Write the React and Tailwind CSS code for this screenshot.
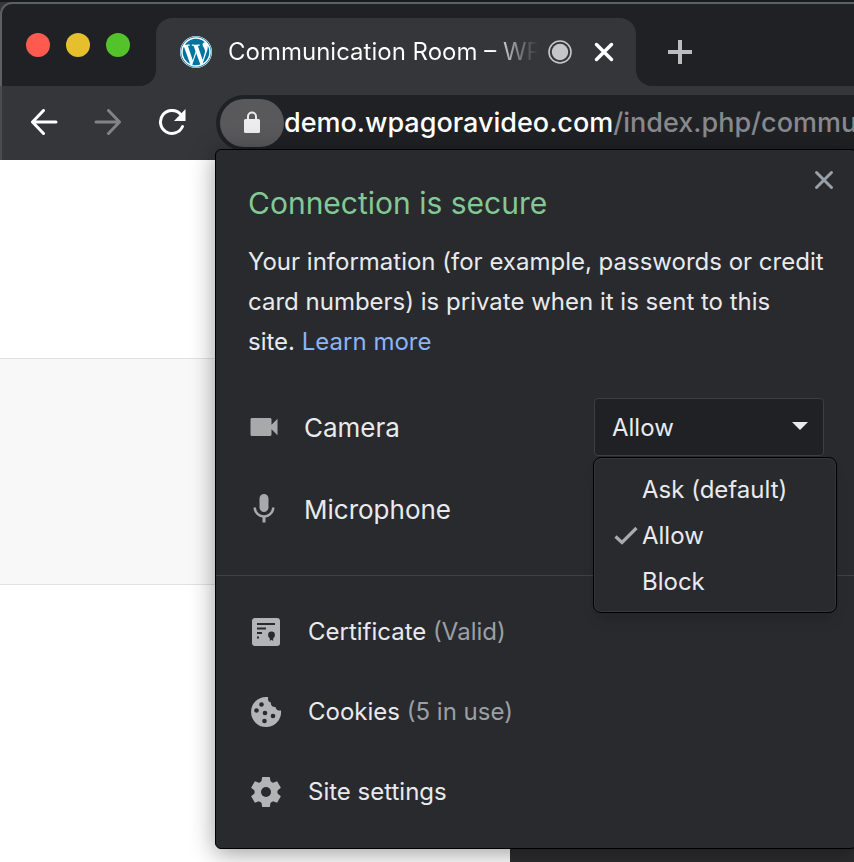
import React, { useState } from "react";
import { FaWordpress } from "react-icons/fa";
import { MdMic, MdVideocam } from "react-icons/md";

function BackArrow({ className }) {
  return (
    <svg viewBox="0 0 28 28" className={className} fill="none" stroke="currentColor" strokeWidth="3" strokeLinecap="round" strokeLinejoin="round" aria-hidden="true">
      <path d="M26 13H2.5M13.500 1.500 2.500 13l11 11.500" />
    </svg>
  );
}

function ForwardArrow({ className }) {
  return (
    <svg viewBox="0 0 28 28" className={className} fill="none" stroke="currentColor" strokeWidth="3" strokeLinecap="round" strokeLinejoin="round" aria-hidden="true">
      <path d="M2 13h23.500M14.500 1.500 25.500 13l-11 11.500" />
    </svg>
  );
}

function ReloadIcon({ className }) {
  return (
    <svg viewBox="0 0 28 28" className={className} aria-hidden="true">
      <path d="M22.500 5.200A11.500 11.500 0 1 0 24.500 17.500" fill="none" stroke="currentColor" strokeWidth="3" strokeLinecap="round" />
      <path d="M27.500 0v12H16z" fill="currentColor" />
    </svg>
  );
}

function LockIcon({ className }) {
  return (
    <svg viewBox="0 0 24 24" className={className} aria-hidden="true">
      <rect x="4" y="8" width="16" height="14" rx="1.500" fill="currentColor" />
      <path d="M8 9V5.500a4 4 0 0 1 8 0V9" fill="none" stroke="currentColor" strokeWidth="2" />
    </svg>
  );
}

function CheckIcon({ className }) {
  return (
    <svg viewBox="0 0 24 20" className={className} fill="none" stroke="currentColor" strokeWidth="3.200" aria-hidden="true">
      <path d="M1.500 10.500l6.500 6L22.500 2" />
    </svg>
  );
}

function CrossIcon({ className, strokeWidth = 3 }) {
  return (
    <svg viewBox="0 0 20 20" className={className} fill="none" stroke="currentColor" strokeWidth={strokeWidth} strokeLinecap="round" aria-hidden="true">
      <path d="M2.500 2.500l15 15M17.500 2.500l-15 15" />
    </svg>
  );
}

function PlusIcon({ className }) {
  return (
    <svg viewBox="0 0 24 24" className={className} fill="none" stroke="currentColor" strokeWidth="4" aria-hidden="true">
      <path d="M12 0v24M0 12h24" />
    </svg>
  );
}

function RecordingIcon({ className }) {
  return (
    <svg viewBox="0 0 24 24" className={className} aria-hidden="true">
      <circle cx="12" cy="12" r="11" fill="none" stroke="currentColor" strokeWidth="1.600" />
      <circle cx="12" cy="12" r="8.200" fill="currentColor" />
    </svg>
  );
}

function CertificateIcon({ className }) {
  return (
    <svg viewBox="0 0 32 32" className={className} aria-hidden="true">
      <rect x="2" y="2" width="28" height="28" rx="3" fill="currentColor" />
      <g fill="#292a2d">
        <path d="M7 7h18v2H7zM7 11.500h9v2H7zM7 16h5v2H7zM7 20.500h2v2H7z" />
        <circle cx="21.500" cy="19" r="3.400" />
        <path d="M19.800 20h3.400v5l-1.700-1.200-1.700 1.200z" />
      </g>
    </svg>
  );
}

function CookieIcon({ className }) {
  return (
    <svg viewBox="0 0 32 32" className={className} aria-hidden="true">
      <path d="M16 1a15 15 0 1 0 15 13.500c-3.200.2-5.200-1-5.500-3.600-3 .2-5-1.200-4.600-4.400C18.300 6.200 17.500 3.700 18.200 1.100Q17 1 16 1z" fill="currentColor" />
      <g fill="#292a2d">
        <circle cx="11.500" cy="8.500" r="2.300" />
        <circle cx="6.500" cy="14.500" r="2.300" />
        <circle cx="15" cy="17" r="2.300" />
        <circle cx="23" cy="20" r="2.300" />
        <circle cx="14.500" cy="25" r="2.300" />
      </g>
    </svg>
  );
}

function GearIcon({ className }) {
  return (
    <svg viewBox="0 0 32 32" className={className} aria-hidden="true">
      <g fill="currentColor">
        <circle cx="16" cy="16" r="11.500" />
        <path d="M12.200 1h7.600l1.200 7v16l-1.200 7h-7.600L11 24V8z" />
        <path d="M12.200 1h7.600l1.200 7v16l-1.200 7h-7.600L11 24V8z" transform="rotate(60 16 16)" />
        <path d="M12.200 1h7.600l1.200 7v16l-1.200 7h-7.600L11 24V8z" transform="rotate(120 16 16)" />
      </g>
      <circle cx="16" cy="16" r="5" fill="#292a2d" />
    </svg>
  );
}

function TabStrip() {
  return (
    <header className="flex h-[86px] border-t-2 border-t-[#171b20] bg-[#35363a]">
      <div className="flex w-[156px] shrink-0 rounded-tl-xl rounded-br-2xl border-t-2 border-l-2 border-[#5c5f63] border-r-transparent border-b-transparent bg-[#202124] pt-[29px] pl-6">
        <div className="flex gap-4">
          <button aria-label="Close window" className="size-6 rounded-full bg-[#ff5a50]" />
          <button aria-label="Minimize window" className="size-6 rounded-full bg-[#e5c02c]" />
          <button aria-label="Zoom window" className="size-6 rounded-full bg-[#54c22b]" />
        </div>
      </div>
      <div className="w-[480px] shrink-0 border-t-2 border-t-[#5c5f63] bg-[#202124] pt-[14px]">
        <div className="flex h-full items-center rounded-t-2xl bg-[#35363a] pl-6 text-white">
          <span className="flex size-8 shrink-0 items-center justify-center rounded-full bg-white">
            <FaWordpress className="size-8 text-[#0073a3]" aria-hidden="true" />
          </span>
          <span className="ml-4 w-[310px] overflow-hidden whitespace-nowrap bg-linear-to-r from-white from-85% to-[#35363a] bg-clip-text text-[24px] leading-8 text-transparent">
            Communication Room – WP
          </span>
          <RecordingIcon className="ml-[10px] size-6 shrink-0 text-[#c3c6cb]" />
          <button aria-label="Close tab" className="ml-[22px]">
            <CrossIcon className="size-5" strokeWidth={3.5} />
          </button>
        </div>
      </div>
      <div className="flex flex-1 items-start rounded-bl-2xl border-t-2 border-t-[#5c5f63] bg-[#202124] pt-9 pl-8">
        <button aria-label="New tab">
          <PlusIcon className="size-6 text-[#b9bcc2]" />
        </button>
      </div>
    </header>
  );
}

function Toolbar() {
  return (
    <nav className="flex h-[74px] items-center border-l-2 border-[#4a4c50] bg-[#35363a] pl-7 text-white">
      <button aria-label="Back">
        <BackArrow className="size-7" />
      </button>
      <button aria-label="Forward" className="ml-9 text-[#828386]">
        <ForwardArrow className="size-7" />
      </button>
      <button aria-label="Reload" className="ml-9">
        <ReloadIcon className="size-7" />
      </button>
      <div className="ml-[30px] flex h-14 min-w-0 flex-1 items-center overflow-hidden rounded-l-full bg-[#202124] pl-1">
        <button aria-label="View site information" className="flex h-12 w-16 shrink-0 items-center justify-center rounded-full bg-[#59595c] text-[#ececec]">
          <LockIcon className="size-6" />
        </button>
        <div className="whitespace-nowrap text-[27px] leading-9 font-medium text-[#88898c]">
          <span className="text-white">demo.wpagoravideo.com</span>/index.php/commu
        </div>
      </div>
    </nav>
  );
}

const OPTIONS = ["Ask (default)", "Allow", "Block"];

function PermissionSelect() {
  const [value, setValue] = useState("Allow");
  return (
    <div className="relative w-[230px]">
      <select
        id="camera"
        value={value}
        onChange={(e) => setValue(e.target.value)}
        className="block h-[58px] w-full appearance-none rounded-sm border border-[#3e3f43] bg-[#202124] pt-px pl-[17px] text-[24px] text-[#e8eaed]"
      >
        {OPTIONS.map((o) => (
          <option key={o}>{o}</option>
        ))}
      </select>
      <svg viewBox="0 0 16 8" className="pointer-events-none absolute top-6 right-4 h-2 w-4 text-[#e8eaed]" aria-hidden="true">
        <path d="M0 0h16L8 8z" fill="currentColor" />
      </svg>
      <ul role="listbox" aria-label="Camera permission" className="absolute top-[59px] -left-px w-[244px] rounded-lg border border-black bg-[#292a2d] pt-[9px] pb-[7px] text-[24px] shadow-lg ring-1 ring-inset ring-[#35363a]">
        {OPTIONS.map((o) => (
          <li key={o} role="option" aria-selected={o === value} onClick={() => setValue(o)} className="flex h-[46px] items-center pl-5">
            <span className="w-7">{o === value && <CheckIcon className="h-5 w-6 text-[#aaabad]" />}</span>
            {o}
          </li>
        ))}
      </ul>
    </div>
  );
}

function InfoRow({ icon, label, note }) {
  return (
    <li>
      <button className="flex h-20 w-full items-center pl-[34px] text-left text-[24px]">
        {icon}
        <span className="ml-[26px]">
          {label} {note && <span className="text-[#9aa0a6]">{note}</span>}
        </span>
      </button>
    </li>
  );
}

function SiteInfoPopup() {
  return (
    <section
      role="dialog"
      aria-labelledby="popup-title"
      className="absolute top-[149px] -right-[3px] left-[215px] rounded-md border border-black bg-[#292a2d] text-[#e8eaed] shadow-[0_4px_24px_rgba(0,0,0,0.4)]"
    >
      <button aria-label="Close" className="absolute top-5 right-[22px] text-[#9aa0a6]">
        <CrossIcon className="size-5" />
      </button>
      <div className="pt-[33px] pr-6 pl-8">
        <h1 id="popup-title" className="text-[30px] leading-10 text-[#81c995]">
          Connection is secure
        </h1>
        <p className="mt-[19px] text-[24px] leading-10">
          Your information (for example, passwords or credit card numbers) is private when it is sent to this
          <br />
          site. <a href="#learn-more" className="text-[#8ab4f8]">Learn more</a>
        </p>
      </div>
      <div className="mt-9 border-b border-[#3f4144] pr-8 pb-[37px] pl-8 text-[26px]">
        <div className="flex h-[58px] items-center">
          <MdVideocam className="-mx-0.5 size-9 text-[#a8a9ab]" aria-hidden="true" />
          <label htmlFor="camera" className="ml-6 flex-1">Camera</label>
          <PermissionSelect />
        </div>
        <div className="mt-6 flex h-[58px] items-center">
          <MdMic className="-mx-0.5 size-9 text-[#a8a9ab]" aria-hidden="true" />
          <span className="ml-6">Microphone</span>
        </div>
      </div>
      <ul className="pt-4 pb-4">
        <InfoRow icon={<CertificateIcon className="size-8 text-[#b3b4b6]" />} label="Certificate" note="(Valid)" />
        <InfoRow icon={<CookieIcon className="size-8 text-[#b3b4b6]" />} label="Cookies" note="(5 in use)" />
        <InfoRow icon={<GearIcon className="size-8 text-[#b3b4b6]" />} label="Site settings" />
      </ul>
    </section>
  );
}

export default function App() {
  return (
    <div className="relative flex min-h-screen flex-col overflow-hidden bg-white font-['Inter','Liberation_Sans',sans-serif]">
      <TabStrip />
      <Toolbar />
      <main className="flex flex-1 flex-col">
        <div className="h-[199px] border-b border-[#e2e2e2]" />
        <div className="h-[226px] border-b border-[#e2e2e2] bg-[#f8f8f8]" />
        <div className="flex flex-1 items-end">
          <div className="ml-[510px] h-10 flex-1 bg-[#2d2d30]" />
        </div>
      </main>
      <SiteInfoPopup />
    </div>
  );
}
